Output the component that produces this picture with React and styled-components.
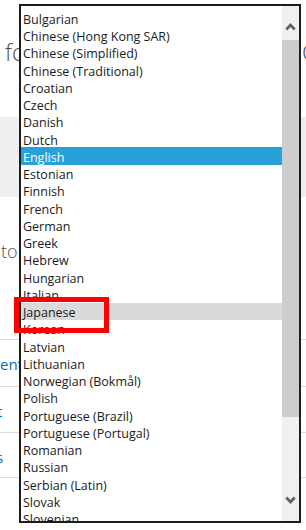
import React from "react";
import styled, { createGlobalStyle } from "styled-components";

const languages = [
  "Bulgarian",
  "Chinese (Hong Kong SAR)",
  "Chinese (Simplified)",
  "Chinese (Traditional)",
  "Croatian",
  "Czech",
  "Danish",
  "Dutch",
  "English",
  "Estonian",
  "Finnish",
  "French",
  "German",
  "Greek",
  "Hebrew",
  "Hungarian",
  "Italian",
  "Japanese",
  "Korean",
  "Latvian",
  "Lithuanian",
  "Norwegian (Bokmål)",
  "Polish",
  "Portuguese (Brazil)",
  "Portuguese (Portugal)",
  "Romanian",
  "Russian",
  "Serbian (Latin)",
  "Slovak",
  "Slovenian",
];

const Global = createGlobalStyle`
  html, body {
    margin: 0;
    padding: 0;
    background: #ffffff;
    overflow: hidden;
  }
  body {
    font-family: "Open Sans", "Noto Sans", sans-serif;
  }
`;

const Chevron = ({ down }) => (
  <svg width="11" height="8" viewBox="0 0 11 8">
    <polyline
      points={down ? "1.3,1.5 5.5,6 9.7,1.5" : "1.3,6.5 5.5,2 9.7,6.5"}
      fill="none"
      stroke="#606060"
      strokeWidth="2.6"
    />
  </svg>
);

export default function App() {
  return (
    <>
      <Global />
      <Page>
        <Header>
          <Title>fo</Title>
          <Title>Co</Title>
        </Header>
        <Band />
        <Intro>
          <Lead>to</Lead>
        </Intro>
        <LinkRow $h={47}>
          <LinkText>ent</LinkText>
        </LinkRow>
        <LinkRow $h={46}>
          <LinkText $shift={-3}>t</LinkText>
        </LinkRow>
        <LinkRow $h={46} $last>
          <LinkText $shift={-4}>s</LinkText>
        </LinkRow>

        <Dropdown>
          <List>
            {languages.map((name) => (
              <Option
                key={name}
                $selected={name === "English"}
                $hover={name === "Japanese"}
              >
                {name}
              </Option>
            ))}
          </List>
          <Scrollbar>
            <UpButton>
              <Chevron />
            </UpButton>
            <Thumb />
            <Track />
            <DownButton>
              <Chevron down />
            </DownButton>
          </Scrollbar>
        </Dropdown>
        <Marker />
      </Page>
    </>
  );
}

const Page = styled.div`
  position: relative;
  width: 306px;
  height: 530px;
  overflow: hidden;
  background: #ffffff;
`;

const Header = styled.div`
  height: 117px;
  box-sizing: border-box;
  padding-top: 37px;
  display: grid;
  grid-template-columns: 302px 1fr;
  overflow: hidden;
`;

const Title = styled.span`
  font-family: "Open Sans", sans-serif;
  font-weight: 300;
  font-size: 23px;
  line-height: 31px;
  color: #4e4e4e;
  white-space: nowrap;
  &:first-child {
    padding-left: 5px;
  }
`;

const Band = styled.div`
  height: 80px;
  background: #efefef;
`;

const Intro = styled.div`
  height: 142px;
  box-sizing: border-box;
  padding: 42px 0 0 1px;
`;

const Lead = styled.span`
  font-family: "Open Sans", sans-serif;
  font-weight: 300;
  font-size: 18px;
  line-height: 24px;
  color: #4e4e4e;
`;

const LinkRow = styled.div`
  height: ${(p) => p.$h}px;
  box-sizing: border-box;
  border-top: 1px solid #dcdcdc;
  border-bottom: ${(p) => (p.$last ? "1px solid #dcdcdc" : "none")};
  padding-top: 13px;
  overflow: hidden;
`;

const LinkText = styled.span`
  display: inline-block;
  margin-left: ${(p) => p.$shift || 0}px;
  font-family: "Open Sans", sans-serif;
  font-size: 15px;
  line-height: 20px;
  color: #0a6cbd;
`;

const Dropdown = styled.div`
  position: absolute;
  left: 19px;
  top: 4px;
  width: 282px;
  height: 519px;
  box-sizing: border-box;
  border: 2px solid #1c1c1c;
  background: #ffffff;
  display: flex;
  overflow: hidden;
`;

const List = styled.div`
  flex: 1;
  padding-top: 3.3px;
  overflow: hidden;
`;

const Option = styled.div`
  height: 17.25px;
  box-sizing: border-box;
  padding: 1.5px 0 0 2px;
  line-height: 17.25px;
  font-family: "Open Sans", sans-serif;
  font-size: 12.5px;
  white-space: nowrap;
  color: ${(p) => (p.$selected ? "#ffffff" : "#1b1b1b")};
  background: ${(p) =>
    p.$selected ? "#28a0da" : p.$hover ? "#dadada" : "transparent"};
`;

const Scrollbar = styled.div`
  width: 17px;
  background: #f0f0f0;
  display: flex;
  flex-direction: column;
`;

const UpButton = styled.div`
  height: 34px;
  box-sizing: border-box;
  padding-top: 17px;
  display: flex;
  justify-content: center;
  align-items: flex-start;
`;

const DownButton = styled(UpButton)`
  padding-top: 9px;
`;

const Thumb = styled.div`
  height: 377px;
  background: #cdcdcd;
`;

const Track = styled.div`
  flex: 1;
`;

const Marker = styled.div`
  position: absolute;
  left: 14px;
  top: 297px;
  width: 95px;
  height: 36px;
  box-sizing: border-box;
  border: 5px solid #ff0000;
`;
